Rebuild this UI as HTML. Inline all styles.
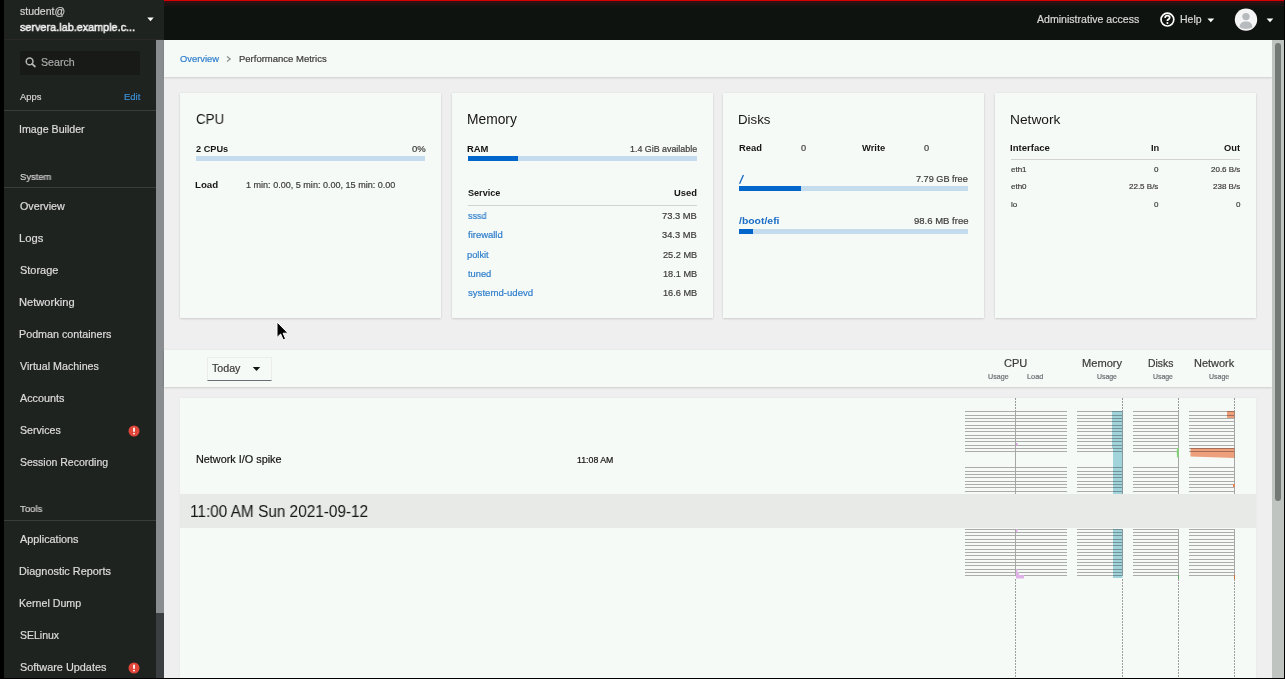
<!DOCTYPE html>
<html><head><meta charset="utf-8">
<style>
*{box-sizing:border-box;margin:0;padding:0}
html,body{width:1285px;height:679px;overflow:hidden;background:#000;font-family:"Liberation Sans",sans-serif;position:relative}
.r{position:absolute}
.t{position:absolute;white-space:nowrap;line-height:0;transform-origin:0 0;will-change:transform}
</style></head><body>
<div class="r" style="left:4px;top:0px;width:160px;height:678px;background:#1f2320;"></div>
<div class="r" style="left:4px;top:39px;width:160px;height:1px;background:#2b2828;"></div>
<div class="t" style="left:19.74px;top:12.00px;font-size:10.49px;color:#d2d2d2;-webkit-text-stroke:0.2px #d2d2d2;">student@</div>
<div class="t" style="left:19.83px;top:27.00px;font-size:11.71px;color:#f0f0f0;transform:scaleX(0.926);-webkit-text-stroke:0.55px #f0f0f0;">servera.lab.example.c...</div>
<svg class="r" style="left:147px;top:17px" width="7" height="5" viewBox="0 0 7 5"><path d="M0.3 0.5H6.7L3.5 4.3Z" fill="#fff"/></svg>
<div class="r" style="left:20px;top:51px;width:120px;height:24px;background:#181a18;"></div>
<svg class="r" style="left:25px;top:57px" width="12" height="11" viewBox="0 0 12 11"><circle cx="4.6" cy="4.4" r="3.4" stroke="#b5b5b5" stroke-width="1.5" fill="none"/><path d="M7.1 6.9L9.9 9.5" stroke="#b5b5b5" stroke-width="1.8" stroke-linecap="round"/></svg>
<div class="t" style="left:41.17px;top:62.00px;font-size:10.61px;color:#a9a9a9;-webkit-text-stroke:0.2px #a9a9a9;">Search</div>
<div class="t" style="left:20.00px;top:97.00px;font-size:9.40px;color:#d2d2d2;-webkit-text-stroke:0.2px #d2d2d2;">Apps</div>
<div class="t" style="left:123.60px;top:97.00px;font-size:9.50px;color:#3d8fd4;-webkit-text-stroke:0.2px #3d8fd4;">Edit</div>
<div class="r" style="left:4px;top:110px;width:152px;height:1px;background:#3a3d3c;"></div>
<div class="t" style="left:19.37px;top:129.00px;font-size:10.65px;color:#dcdcdc;-webkit-text-stroke:0.2px #dcdcdc;">Image Builder</div>
<div class="t" style="left:19.71px;top:177.00px;font-size:9.60px;color:#d2d2d2;transform:scaleX(0.977);-webkit-text-stroke:0.2px #d2d2d2;">System</div>
<div class="r" style="left:4px;top:187px;width:152px;height:1px;background:#3a3d3c;"></div>
<div class="t" style="left:19.50px;top:206.00px;font-size:10.50px;color:#dcdcdc;transform:scaleX(1.023);-webkit-text-stroke:0.2px #dcdcdc;">Overview</div>
<div class="t" style="left:19.12px;top:238.00px;font-size:10.50px;color:#dcdcdc;transform:scaleX(1.068);-webkit-text-stroke:0.2px #dcdcdc;">Logs</div>
<div class="t" style="left:19.66px;top:270.00px;font-size:10.50px;color:#dcdcdc;transform:scaleX(1.044);-webkit-text-stroke:0.2px #dcdcdc;">Storage</div>
<div class="t" style="left:19.13px;top:302.00px;font-size:10.50px;color:#dcdcdc;transform:scaleX(1.058);-webkit-text-stroke:0.2px #dcdcdc;">Networking</div>
<div class="t" style="left:19.16px;top:334.00px;font-size:10.50px;color:#dcdcdc;transform:scaleX(1.022);-webkit-text-stroke:0.2px #dcdcdc;">Podman containers</div>
<div class="t" style="left:20.00px;top:366.00px;font-size:10.50px;color:#dcdcdc;transform:scaleX(1.019);-webkit-text-stroke:0.2px #dcdcdc;">Virtual Machines</div>
<div class="t" style="left:20.00px;top:398.00px;font-size:10.50px;color:#dcdcdc;transform:scaleX(1.027);-webkit-text-stroke:0.2px #dcdcdc;">Accounts</div>
<div class="t" style="left:19.67px;top:430.00px;font-size:10.50px;color:#dcdcdc;transform:scaleX(1.012);-webkit-text-stroke:0.2px #dcdcdc;">Services</div>
<div class="t" style="left:19.67px;top:462.00px;font-size:10.50px;color:#dcdcdc;-webkit-text-stroke:0.2px #dcdcdc;">Session Recording</div>
<div class="t" style="left:19.85px;top:509.00px;font-size:9.80px;color:#d2d2d2;transform:scaleX(0.977);-webkit-text-stroke:0.2px #d2d2d2;">Tools</div>
<div class="r" style="left:4px;top:520px;width:152px;height:1px;background:#3a3d3c;"></div>
<div class="t" style="left:20.00px;top:539.00px;font-size:10.50px;color:#dcdcdc;transform:scaleX(1.034);-webkit-text-stroke:0.2px #dcdcdc;">Applications</div>
<div class="t" style="left:19.15px;top:571.00px;font-size:10.50px;color:#dcdcdc;transform:scaleX(1.036);-webkit-text-stroke:0.2px #dcdcdc;">Diagnostic Reports</div>
<div class="t" style="left:19.17px;top:603.00px;font-size:10.50px;color:#dcdcdc;transform:scaleX(1.014);-webkit-text-stroke:0.2px #dcdcdc;">Kernel Dump</div>
<div class="t" style="left:19.67px;top:635.00px;font-size:10.50px;color:#dcdcdc;-webkit-text-stroke:0.2px #dcdcdc;">SELinux</div>
<div class="t" style="left:19.66px;top:667.00px;font-size:10.50px;color:#dcdcdc;transform:scaleX(1.035);-webkit-text-stroke:0.2px #dcdcdc;">Software Updates</div>
<svg class="r" style="left:128.3px;top:424.8px" width="12" height="12" viewBox="0 0 12 12"><circle cx="6" cy="6" r="5.5" fill="#e0453a"/><rect x="5.1" y="2.6" width="1.8" height="4.4" rx="0.9" fill="#fff"/><circle cx="6" cy="8.6" r="0.95" fill="#fff"/></svg>
<svg class="r" style="left:128.3px;top:662.2px" width="12" height="12" viewBox="0 0 12 12"><circle cx="6" cy="6" r="5.5" fill="#e0453a"/><rect x="5.1" y="2.6" width="1.8" height="4.4" rx="0.9" fill="#fff"/><circle cx="6" cy="8.6" r="0.95" fill="#fff"/></svg>
<div class="r" style="left:156px;top:40px;width:8px;height:638px;background:#3c3f42;"></div>
<div class="r" style="left:156px;top:40px;width:8px;height:573px;background:#8a8d90;"></div>
<div class="r" style="left:164px;top:0px;width:1120px;height:40px;background:#0f1310;"></div>
<div class="r" style="left:164px;top:0;width:1120px;height:7px;background:linear-gradient(#d80000 0px,#d80000 1px,#2e1012 1px,#321114 2px,#321114 3px,#261113 3px,#201112 4px,#1c1311 5px,#161511 6px,#0f1310 7px)"></div>
<div class="t" style="left:1036.90px;top:19.00px;font-size:10.59px;color:#d8d8d8;-webkit-text-stroke:0.2px #d8d8d8;">Administrative access</div>
<svg class="r" style="left:1159px;top:11px" width="17" height="17" viewBox="0 0 17 17"><circle cx="8.4" cy="8.6" r="6.4" stroke="#fff" stroke-width="1.7" fill="none"/><path d="M6.1 6.9C6.1 5.5 7.1 4.6 8.4 4.6C9.8 4.6 10.7 5.4 10.7 6.6C10.7 7.9 9.6 8.2 8.9 8.7C8.5 9 8.4 9.4 8.4 10" stroke="#fff" stroke-width="1.7" fill="none"/><circle cx="8.4" cy="12" r="1.05" fill="#fff"/></svg>
<div class="t" style="left:1179.58px;top:19.00px;font-size:10.50px;color:#d8d8d8;-webkit-text-stroke:0.2px #d8d8d8;">Help</div>
<svg class="r" style="left:1207px;top:18px" width="8" height="5" viewBox="0 0 8 5"><path d="M0.4 0.6H7.2L3.8 4.3Z" fill="#fff"/></svg>
<svg class="r" style="left:1234px;top:8px" width="24" height="24" viewBox="0 0 24 24"><circle cx="12" cy="11.6" r="11.2" fill="#f5f5f5"/><circle cx="12" cy="8.6" r="3.7" fill="#b8bbbe"/><path d="M5.6 19.2C5.9 14.8 8.5 13.6 12 13.6S18.1 14.8 18.4 19.2C15 21.5 9 21.5 5.6 19.2Z" fill="#b8bbbe"/></svg>
<svg class="r" style="left:1266px;top:18px" width="8" height="5" viewBox="0 0 8 5"><path d="M0.6 0.6H7.3L4 4.3Z" fill="#fff"/></svg>
<div class="r" style="left:164px;top:40px;width:1108px;height:638px;background:#f0eff0;"></div>
<div class="r" style="left:164px;top:40px;width:1108px;height:37px;background:#f6faf6;box-shadow:0 1px 2px rgba(3,3,3,0.14);"></div>
<div class="t" style="left:179.76px;top:59.00px;font-size:9.36px;color:#2f7fcc;-webkit-text-stroke:0.2px #2f7fcc;">Overview</div>
<svg class="r" style="left:226px;top:56px" width="6" height="6" viewBox="0 0 6 6"><path d="M1 0.6L4.2 3L1 5.4" stroke="#8a8d90" stroke-width="1.2" fill="none"/></svg>
<div class="t" style="left:238.66px;top:59.00px;font-size:9.51px;color:#3a3a3a;-webkit-text-stroke:0.2px #3a3a3a;">Performance Metrics</div>
<div class="r" style="left:180px;top:93px;width:261px;height:225px;background:#f6faf6;box-shadow:0 1px 2px rgba(3,3,3,0.12),0 0 2px rgba(3,3,3,0.06);"></div>
<div class="r" style="left:452px;top:93px;width:261px;height:225px;background:#f6faf6;box-shadow:0 1px 2px rgba(3,3,3,0.12),0 0 2px rgba(3,3,3,0.06);"></div>
<div class="r" style="left:723px;top:93px;width:261px;height:225px;background:#f6faf6;box-shadow:0 1px 2px rgba(3,3,3,0.12),0 0 2px rgba(3,3,3,0.06);"></div>
<div class="r" style="left:995px;top:93px;width:261px;height:225px;background:#f6faf6;box-shadow:0 1px 2px rgba(3,3,3,0.12),0 0 2px rgba(3,3,3,0.06);"></div>
<div class="t" style="left:195.97px;top:119.00px;font-size:14.22px;color:#151515;transform:scaleX(0.939);">CPU</div>
<div class="t" style="left:195.71px;top:149.00px;font-size:9.18px;color:#151515;font-weight:bold;">2 CPUs</div>
<div class="t" style="left:411.55px;top:149.00px;font-size:9.50px;color:#3c3c3c;-webkit-text-stroke:0.2px #3c3c3c;">0%</div>
<div class="r" style="left:196px;top:156px;width:229px;height:5px;background:#c5dcee;"></div>
<div class="t" style="left:195.39px;top:185.00px;font-size:9.73px;color:#151515;font-weight:bold;">Load</div>
<div class="t" style="left:246.43px;top:185.00px;font-size:9.05px;color:#3c3c3c;-webkit-text-stroke:0.2px #3c3c3c;">1 min: 0.00, 5 min: 0.00, 15 min: 0.00</div>
<div class="t" style="left:467.13px;top:120.00px;font-size:13.80px;color:#151515;">Memory</div>
<div class="t" style="left:467.41px;top:149.00px;font-size:9.43px;color:#151515;font-weight:bold;">RAM</div>
<div class="t" style="left:629.55px;top:149.00px;font-size:8.88px;color:#3c3c3c;-webkit-text-stroke:0.2px #3c3c3c;">1.4 GiB available</div>
<div class="r" style="left:468px;top:156px;width:229px;height:5px;background:#c5dcee;"></div>
<div class="r" style="left:468px;top:156px;width:50px;height:5px;background:#0066cc;"></div>
<div class="t" style="left:467.86px;top:193.00px;font-size:9.10px;color:#151515;font-weight:bold;">Service</div>
<div class="t" style="left:674.16px;top:193.00px;font-size:9.38px;color:#151515;font-weight:bold;">Used</div>
<div class="r" style="left:468px;top:205px;width:229px;height:1px;background:#d2d2d2;"></div>
<div class="t" style="left:467.86px;top:216.00px;font-size:9.30px;color:#2f7fcc;transform:scaleX(0.965);-webkit-text-stroke:0.2px #2f7fcc;">sssd</div>
<div class="t" style="left:662.06px;top:216.00px;font-size:9.20px;color:#3c3c3c;transform:scaleX(1.017);-webkit-text-stroke:0.2px #3c3c3c;">73.3 MB</div>
<div class="t" style="left:468.00px;top:235.00px;font-size:9.30px;color:#2f7fcc;transform:scaleX(1.018);-webkit-text-stroke:0.2px #2f7fcc;">firewalld</div>
<div class="t" style="left:662.21px;top:235.00px;font-size:9.20px;color:#3c3c3c;transform:scaleX(1.012);-webkit-text-stroke:0.2px #3c3c3c;">34.3 MB</div>
<div class="t" style="left:467.42px;top:255.00px;font-size:9.30px;color:#2f7fcc;-webkit-text-stroke:0.2px #2f7fcc;">polkit</div>
<div class="t" style="left:662.62px;top:255.00px;font-size:9.20px;color:#3c3c3c;-webkit-text-stroke:0.2px #3c3c3c;">25.2 MB</div>
<div class="t" style="left:468.00px;top:274.00px;font-size:9.30px;color:#2f7fcc;-webkit-text-stroke:0.2px #2f7fcc;">tuned</div>
<div class="t" style="left:662.62px;top:274.00px;font-size:9.20px;color:#3c3c3c;-webkit-text-stroke:0.2px #3c3c3c;">18.1 MB</div>
<div class="t" style="left:467.85px;top:293.00px;font-size:9.30px;color:#2f7fcc;transform:scaleX(1.034);-webkit-text-stroke:0.2px #2f7fcc;">systemd-udevd</div>
<div class="t" style="left:662.62px;top:293.00px;font-size:9.20px;color:#3c3c3c;-webkit-text-stroke:0.2px #3c3c3c;">16.6 MB</div>
<div class="t" style="left:738.36px;top:120.00px;font-size:13.07px;color:#151515;transform:scaleX(1.016);">Disks</div>
<div class="t" style="left:738.82px;top:148.00px;font-size:9.36px;color:#151515;font-weight:bold;">Read</div>
<div class="t" style="left:800.61px;top:148.00px;font-size:9.20px;color:#3c3c3c;-webkit-text-stroke:0.2px #3c3c3c;">0</div>
<div class="t" style="left:862.10px;top:148.00px;font-size:9.40px;color:#151515;font-weight:bold;">Write</div>
<div class="t" style="left:923.71px;top:148.00px;font-size:9.20px;color:#3c3c3c;-webkit-text-stroke:0.2px #3c3c3c;">0</div>
<svg class="r" style="left:737px;top:173px" width="9" height="13" viewBox="0 0 9 13"><path d="M2.6 10.8L6.4 2.1" stroke="#1668c4" stroke-width="1.35"/></svg>
<div class="t" style="left:916.37px;top:179.00px;font-size:9.15px;color:#3c3c3c;-webkit-text-stroke:0.2px #3c3c3c;">7.79 GB free</div>
<div class="r" style="left:739px;top:186px;width:229px;height:5px;background:#c5dcee;"></div>
<div class="r" style="left:739px;top:186px;width:62px;height:5px;background:#0066cc;"></div>
<div class="t" style="left:739.20px;top:221.00px;font-size:9.40px;color:#1a6cc6;font-weight:bold;transform:scaleX(1.111);">/boot/efi</div>
<div class="t" style="left:913.85px;top:221.00px;font-size:9.53px;color:#3c3c3c;-webkit-text-stroke:0.2px #3c3c3c;">98.6 MB free</div>
<div class="r" style="left:739px;top:229px;width:229px;height:5px;background:#c5dcee;"></div>
<div class="r" style="left:739px;top:229px;width:14px;height:5px;background:#0066cc;"></div>
<div class="t" style="left:1010.13px;top:120.00px;font-size:13.21px;color:#151515;transform:scaleX(1.042);">Network</div>
<div class="t" style="left:1010.40px;top:148.00px;font-size:9.30px;color:#151515;font-weight:bold;transform:scaleX(1.028);">Interface</div>
<div class="t" style="left:1150.58px;top:148.00px;font-size:9.30px;color:#151515;font-weight:bold;">In</div>
<div class="t" style="left:1224.03px;top:148.00px;font-size:9.30px;color:#151515;font-weight:bold;">Out</div>
<div class="r" style="left:1011px;top:159px;width:229px;height:1px;background:#d2d2d2;"></div>
<div class="t" style="left:1010.75px;top:170.00px;font-size:8.00px;color:#3c3c3c;-webkit-text-stroke:0.2px #3c3c3c;">eth1</div>
<div class="t" style="left:1154.15px;top:170.00px;font-size:8.00px;color:#3c3c3c;-webkit-text-stroke:0.2px #3c3c3c;">0</div>
<div class="t" style="left:1210.90px;top:170.00px;font-size:8.00px;color:#3c3c3c;-webkit-text-stroke:0.2px #3c3c3c;">20.6 B/s</div>
<div class="t" style="left:1010.75px;top:187.00px;font-size:8.00px;color:#3c3c3c;-webkit-text-stroke:0.2px #3c3c3c;">eth0</div>
<div class="t" style="left:1129.30px;top:187.00px;font-size:8.00px;color:#3c3c3c;-webkit-text-stroke:0.2px #3c3c3c;">22.5 B/s</div>
<div class="t" style="left:1213.12px;top:187.00px;font-size:8.00px;color:#3c3c3c;-webkit-text-stroke:0.2px #3c3c3c;">238 B/s</div>
<div class="t" style="left:1010.50px;top:205.00px;font-size:8.00px;color:#3c3c3c;-webkit-text-stroke:0.2px #3c3c3c;">lo</div>
<div class="t" style="left:1154.15px;top:205.00px;font-size:8.00px;color:#3c3c3c;-webkit-text-stroke:0.2px #3c3c3c;">0</div>
<div class="t" style="left:1235.75px;top:205.00px;font-size:8.00px;color:#3c3c3c;-webkit-text-stroke:0.2px #3c3c3c;">0</div>
<svg class="r" style="left:276px;top:321px;z-index:10" width="14" height="20" viewBox="0 0 14 20"><path d="M1 1V16.5L4.6 13L7.2 18.8L9.6 17.8L7.1 12.2H12Z" fill="#000" stroke="#fff" stroke-width="1"/></svg>
<div class="r" style="left:164px;top:350px;width:1108px;height:37px;background:#f6faf6;box-shadow:0 1px 2px rgba(3,3,3,0.12),0 0 2px rgba(3,3,3,0.06);"></div>
<div class="r" style="left:207px;top:357px;width:65px;height:24px;background:#f6faf6;border:1px solid #ececec;border-bottom:1px solid #6a6e73;box-sizing:border-box;"></div>
<div class="t" style="left:212.23px;top:368.00px;font-size:10.67px;color:#3a3a3a;-webkit-text-stroke:0.2px #3a3a3a;">Today</div>
<svg class="r" style="left:252px;top:366px" width="9" height="6" viewBox="0 0 9 6"><path d="M0.8 1H8.2L4.5 5Z" fill="#151515"/></svg>
<div class="t" style="left:1004.28px;top:363.00px;font-size:11.06px;color:#3a3a3a;-webkit-text-stroke:0.2px #3a3a3a;">CPU</div>
<div class="t" style="left:1081.93px;top:363.00px;font-size:11.12px;color:#3a3a3a;-webkit-text-stroke:0.2px #3a3a3a;">Memory</div>
<div class="t" style="left:1147.89px;top:364.00px;font-size:10.36px;color:#3a3a3a;-webkit-text-stroke:0.2px #3a3a3a;">Disks</div>
<div class="t" style="left:1194.14px;top:363.00px;font-size:10.96px;color:#3a3a3a;-webkit-text-stroke:0.2px #3a3a3a;">Network</div>
<div class="t" style="left:988.25px;top:377.00px;font-size:7.14px;color:#6a6e73;-webkit-text-stroke:0.2px #6a6e73;">Usage</div>
<div class="t" style="left:1097.47px;top:377.00px;font-size:6.92px;color:#6a6e73;-webkit-text-stroke:0.2px #6a6e73;">Usage</div>
<div class="t" style="left:1153.17px;top:377.00px;font-size:6.92px;color:#6a6e73;-webkit-text-stroke:0.2px #6a6e73;">Usage</div>
<div class="t" style="left:1209.26px;top:377.00px;font-size:7.00px;color:#6a6e73;-webkit-text-stroke:0.2px #6a6e73;">Usage</div>
<div class="t" style="left:1026.92px;top:377.00px;font-size:7.37px;color:#6a6e73;-webkit-text-stroke:0.2px #6a6e73;">Load</div>
<div class="r" style="left:180px;top:398px;width:1076px;height:280px;background:#f6faf6;box-shadow:0 0 2px rgba(3,3,3,0.06);"></div>
<div class="t" style="left:195.85px;top:459.00px;font-size:10.85px;color:#151515;-webkit-text-stroke:0.2px #151515;">Network I/O spike</div>
<div class="t" style="left:577.25px;top:460.00px;font-size:8.78px;color:#151515;-webkit-text-stroke:0.2px #151515;">11:08 AM</div>
<div class="r" style="left:180px;top:494px;width:1076px;height:34px;background:#e7eae7;"></div>
<div class="t" style="left:190.24px;top:512.00px;font-size:15.79px;color:#151515;transform:scaleX(0.973);">11:00 AM Sun 2021-09-12</div>
<svg class="r" style="left:0;top:0" width="1285" height="679" viewBox="0 0 1285 679"><rect x="965" y="411" width="102" height="1" fill="#ababab"/><rect x="965" y="415" width="102" height="1" fill="#ababab"/><rect x="965" y="418" width="102" height="1" fill="#ababab"/><rect x="965" y="421" width="102" height="1" fill="#ababab"/><rect x="965" y="425" width="102" height="1" fill="#ababab"/><rect x="965" y="428" width="102" height="1" fill="#ababab"/><rect x="965" y="431" width="102" height="1" fill="#ababab"/><rect x="965" y="435" width="102" height="1" fill="#ababab"/><rect x="965" y="438" width="102" height="1" fill="#ababab"/><rect x="965" y="441" width="102" height="1" fill="#ababab"/><rect x="965" y="445" width="102" height="1" fill="#ababab"/><rect x="965" y="448" width="102" height="1" fill="#ababab"/><rect x="965" y="451" width="102" height="1" fill="#ababab"/><rect x="965" y="467" width="102" height="1" fill="#ababab"/><rect x="965" y="471" width="102" height="1" fill="#ababab"/><rect x="965" y="474" width="102" height="1" fill="#ababab"/><rect x="965" y="477" width="102" height="1" fill="#ababab"/><rect x="965" y="481" width="102" height="1" fill="#ababab"/><rect x="965" y="484" width="102" height="1" fill="#ababab"/><rect x="965" y="487" width="102" height="1" fill="#ababab"/><rect x="965" y="491" width="102" height="1" fill="#ababab"/><rect x="965" y="529" width="102" height="1" fill="#ababab"/><rect x="965" y="532" width="102" height="1" fill="#ababab"/><rect x="965" y="535" width="102" height="1" fill="#ababab"/><rect x="965" y="539" width="102" height="1" fill="#ababab"/><rect x="965" y="542" width="102" height="1" fill="#ababab"/><rect x="965" y="545" width="102" height="1" fill="#ababab"/><rect x="965" y="549" width="102" height="1" fill="#ababab"/><rect x="965" y="552" width="102" height="1" fill="#ababab"/><rect x="965" y="555" width="102" height="1" fill="#ababab"/><rect x="965" y="559" width="102" height="1" fill="#ababab"/><rect x="965" y="562" width="102" height="1" fill="#ababab"/><rect x="965" y="565" width="102" height="1" fill="#ababab"/><rect x="965" y="569" width="102" height="1" fill="#ababab"/><rect x="965" y="572" width="102" height="1" fill="#ababab"/><rect x="965" y="575" width="102" height="1" fill="#ababab"/><rect x="1015" y="411" width="1" height="83" fill="#a6a6a6"/><rect x="1015" y="529" width="1" height="47" fill="#a6a6a6"/><line x1="1015.5" y1="398" x2="1015.5" y2="411" stroke="#9a9a9a" stroke-width="1" stroke-dasharray="2 1"/><line x1="1015.5" y1="579" x2="1015.5" y2="678" stroke="#a0a0a0" stroke-width="1" stroke-dasharray="2 1"/><rect x="1077" y="411" width="46" height="1" fill="#ababab"/><rect x="1077" y="415" width="46" height="1" fill="#ababab"/><rect x="1077" y="418" width="46" height="1" fill="#ababab"/><rect x="1077" y="421" width="46" height="1" fill="#ababab"/><rect x="1077" y="425" width="46" height="1" fill="#ababab"/><rect x="1077" y="428" width="46" height="1" fill="#ababab"/><rect x="1077" y="431" width="46" height="1" fill="#ababab"/><rect x="1077" y="435" width="46" height="1" fill="#ababab"/><rect x="1077" y="438" width="46" height="1" fill="#ababab"/><rect x="1077" y="441" width="46" height="1" fill="#ababab"/><rect x="1077" y="445" width="46" height="1" fill="#ababab"/><rect x="1077" y="448" width="46" height="1" fill="#ababab"/><rect x="1077" y="451" width="46" height="1" fill="#ababab"/><rect x="1077" y="467" width="46" height="1" fill="#ababab"/><rect x="1077" y="471" width="46" height="1" fill="#ababab"/><rect x="1077" y="474" width="46" height="1" fill="#ababab"/><rect x="1077" y="477" width="46" height="1" fill="#ababab"/><rect x="1077" y="481" width="46" height="1" fill="#ababab"/><rect x="1077" y="484" width="46" height="1" fill="#ababab"/><rect x="1077" y="487" width="46" height="1" fill="#ababab"/><rect x="1077" y="491" width="46" height="1" fill="#ababab"/><rect x="1077" y="529" width="46" height="1" fill="#ababab"/><rect x="1077" y="532" width="46" height="1" fill="#ababab"/><rect x="1077" y="535" width="46" height="1" fill="#ababab"/><rect x="1077" y="539" width="46" height="1" fill="#ababab"/><rect x="1077" y="542" width="46" height="1" fill="#ababab"/><rect x="1077" y="545" width="46" height="1" fill="#ababab"/><rect x="1077" y="549" width="46" height="1" fill="#ababab"/><rect x="1077" y="552" width="46" height="1" fill="#ababab"/><rect x="1077" y="555" width="46" height="1" fill="#ababab"/><rect x="1077" y="559" width="46" height="1" fill="#ababab"/><rect x="1077" y="562" width="46" height="1" fill="#ababab"/><rect x="1077" y="565" width="46" height="1" fill="#ababab"/><rect x="1077" y="569" width="46" height="1" fill="#ababab"/><rect x="1077" y="572" width="46" height="1" fill="#ababab"/><rect x="1077" y="575" width="46" height="1" fill="#ababab"/><rect x="1122" y="411" width="1" height="83" fill="#a6a6a6"/><rect x="1122" y="529" width="1" height="47" fill="#a6a6a6"/><line x1="1122.5" y1="398" x2="1122.5" y2="411" stroke="#9a9a9a" stroke-width="1" stroke-dasharray="2 1"/><line x1="1122.5" y1="579" x2="1122.5" y2="678" stroke="#a0a0a0" stroke-width="1" stroke-dasharray="2 1"/><rect x="1133" y="411" width="46" height="1" fill="#ababab"/><rect x="1133" y="415" width="46" height="1" fill="#ababab"/><rect x="1133" y="418" width="46" height="1" fill="#ababab"/><rect x="1133" y="421" width="46" height="1" fill="#ababab"/><rect x="1133" y="425" width="46" height="1" fill="#ababab"/><rect x="1133" y="428" width="46" height="1" fill="#ababab"/><rect x="1133" y="431" width="46" height="1" fill="#ababab"/><rect x="1133" y="435" width="46" height="1" fill="#ababab"/><rect x="1133" y="438" width="46" height="1" fill="#ababab"/><rect x="1133" y="441" width="46" height="1" fill="#ababab"/><rect x="1133" y="445" width="46" height="1" fill="#ababab"/><rect x="1133" y="448" width="46" height="1" fill="#ababab"/><rect x="1133" y="451" width="46" height="1" fill="#ababab"/><rect x="1133" y="467" width="46" height="1" fill="#ababab"/><rect x="1133" y="471" width="46" height="1" fill="#ababab"/><rect x="1133" y="474" width="46" height="1" fill="#ababab"/><rect x="1133" y="477" width="46" height="1" fill="#ababab"/><rect x="1133" y="481" width="46" height="1" fill="#ababab"/><rect x="1133" y="484" width="46" height="1" fill="#ababab"/><rect x="1133" y="487" width="46" height="1" fill="#ababab"/><rect x="1133" y="491" width="46" height="1" fill="#ababab"/><rect x="1133" y="529" width="46" height="1" fill="#ababab"/><rect x="1133" y="532" width="46" height="1" fill="#ababab"/><rect x="1133" y="535" width="46" height="1" fill="#ababab"/><rect x="1133" y="539" width="46" height="1" fill="#ababab"/><rect x="1133" y="542" width="46" height="1" fill="#ababab"/><rect x="1133" y="545" width="46" height="1" fill="#ababab"/><rect x="1133" y="549" width="46" height="1" fill="#ababab"/><rect x="1133" y="552" width="46" height="1" fill="#ababab"/><rect x="1133" y="555" width="46" height="1" fill="#ababab"/><rect x="1133" y="559" width="46" height="1" fill="#ababab"/><rect x="1133" y="562" width="46" height="1" fill="#ababab"/><rect x="1133" y="565" width="46" height="1" fill="#ababab"/><rect x="1133" y="569" width="46" height="1" fill="#ababab"/><rect x="1133" y="572" width="46" height="1" fill="#ababab"/><rect x="1133" y="575" width="46" height="1" fill="#ababab"/><rect x="1178" y="411" width="1" height="83" fill="#a6a6a6"/><rect x="1178" y="529" width="1" height="47" fill="#a6a6a6"/><line x1="1178.5" y1="398" x2="1178.5" y2="411" stroke="#9a9a9a" stroke-width="1" stroke-dasharray="2 1"/><line x1="1178.5" y1="579" x2="1178.5" y2="678" stroke="#a0a0a0" stroke-width="1" stroke-dasharray="2 1"/><rect x="1189" y="411" width="46" height="1" fill="#ababab"/><rect x="1189" y="415" width="46" height="1" fill="#ababab"/><rect x="1189" y="418" width="46" height="1" fill="#ababab"/><rect x="1189" y="421" width="46" height="1" fill="#ababab"/><rect x="1189" y="425" width="46" height="1" fill="#ababab"/><rect x="1189" y="428" width="46" height="1" fill="#ababab"/><rect x="1189" y="431" width="46" height="1" fill="#ababab"/><rect x="1189" y="435" width="46" height="1" fill="#ababab"/><rect x="1189" y="438" width="46" height="1" fill="#ababab"/><rect x="1189" y="441" width="46" height="1" fill="#ababab"/><rect x="1189" y="445" width="46" height="1" fill="#ababab"/><rect x="1189" y="448" width="46" height="1" fill="#ababab"/><rect x="1189" y="451" width="46" height="1" fill="#ababab"/><rect x="1189" y="467" width="46" height="1" fill="#ababab"/><rect x="1189" y="471" width="46" height="1" fill="#ababab"/><rect x="1189" y="474" width="46" height="1" fill="#ababab"/><rect x="1189" y="477" width="46" height="1" fill="#ababab"/><rect x="1189" y="481" width="46" height="1" fill="#ababab"/><rect x="1189" y="484" width="46" height="1" fill="#ababab"/><rect x="1189" y="487" width="46" height="1" fill="#ababab"/><rect x="1189" y="491" width="46" height="1" fill="#ababab"/><rect x="1189" y="529" width="46" height="1" fill="#ababab"/><rect x="1189" y="532" width="46" height="1" fill="#ababab"/><rect x="1189" y="535" width="46" height="1" fill="#ababab"/><rect x="1189" y="539" width="46" height="1" fill="#ababab"/><rect x="1189" y="542" width="46" height="1" fill="#ababab"/><rect x="1189" y="545" width="46" height="1" fill="#ababab"/><rect x="1189" y="549" width="46" height="1" fill="#ababab"/><rect x="1189" y="552" width="46" height="1" fill="#ababab"/><rect x="1189" y="555" width="46" height="1" fill="#ababab"/><rect x="1189" y="559" width="46" height="1" fill="#ababab"/><rect x="1189" y="562" width="46" height="1" fill="#ababab"/><rect x="1189" y="565" width="46" height="1" fill="#ababab"/><rect x="1189" y="569" width="46" height="1" fill="#ababab"/><rect x="1189" y="572" width="46" height="1" fill="#ababab"/><rect x="1189" y="575" width="46" height="1" fill="#ababab"/><rect x="1234" y="411" width="1" height="83" fill="#a6a6a6"/><rect x="1234" y="529" width="1" height="47" fill="#a6a6a6"/><line x1="1234.5" y1="398" x2="1234.5" y2="411" stroke="#9a9a9a" stroke-width="1" stroke-dasharray="2 1"/><line x1="1234.5" y1="579" x2="1234.5" y2="678" stroke="#a0a0a0" stroke-width="1" stroke-dasharray="2 1"/><g style="mix-blend-mode:multiply"><rect x="1112" y="411" width="10.5" height="37" fill="#a6d8e2"/><rect x="1113" y="447" width="9.5" height="47" fill="#a6d8e2"/><rect x="1113" y="529" width="9.5" height="49" fill="#a6d8e2"/><rect x="1227" y="411" width="7.5" height="7" fill="#f6a37f"/><path d="M1190.5 448H1234.5V458L1190.5 456.5Z" fill="#f6a37f"/></g><rect x="1233" y="484" width="1.8" height="3" fill="#f08050"/><path d="M1177 448H1178.6V457.6H1177Q1176.4 452 1177 448Z" fill="#7fd873"/><rect x="1178" y="575" width="1" height="4" fill="#5aa860"/><rect x="1234" y="575" width="1" height="4" fill="#d0703a"/><rect x="1016" y="443" width="1.5" height="3" fill="#d9a0e0"/><rect x="1016" y="529" width="1.5" height="3" fill="#e0b0e8"/><rect x="1016" y="569" width="1.5" height="3" fill="#e0b0e8"/><rect x="1016" y="572" width="3" height="3" fill="#e0b0e8"/><rect x="1016" y="575" width="8" height="3.5" fill="#e0b0e8"/></svg>
<div class="r" style="left:1272px;top:40px;width:12px;height:638px;background:#bfc4c0;"></div>
<div class="r" style="left:1275px;top:43px;width:6px;height:458px;border-radius:3px;background:#737974"></div>
</body></html>
